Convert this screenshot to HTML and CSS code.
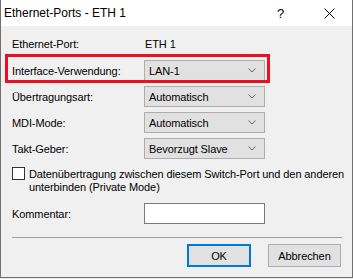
FILE: index.html
```html
<!DOCTYPE html>
<html lang="de">
<head>
    <meta charset="UTF-8">
    <title>Ethernet-Ports - ETH 1</title>
    <link rel="stylesheet" href="styles.css">
</head>
<body>
    <div class="window">
        <div class="title-bar">
            <span class="title">Ethernet-Ports - ETH 1</span>
            <span class="help">?</span>
            <svg class="close" width="11" height="11" viewBox="0 0 11 11">
                <path d="M0.5 0.5 L10.5 10.5 M10.5 0.5 L0.5 10.5" stroke="#000" stroke-width="1" fill="none"/>
            </svg>
        </div>

        <div class="content">
            <div class="form">
                <div class="row row-first">
                    <span class="label">Ethernet-Port:</span>
                    <span class="value">ETH 1</span>
                </div>
                <div class="row">
                    <span class="label">Interface-Verwendung:</span>
                    <div class="select">LAN-1 <svg class="chevron" width="8" height="5" viewBox="0 0 8 5"><path d="M0.5 0.5 L4 4 L7.5 0.5" stroke="#666" fill="none"/></svg></div>
                </div>
                <div class="row">
                    <span class="label">Übertragungsart:</span>
                    <div class="select">Automatisch <svg class="chevron" width="8" height="5" viewBox="0 0 8 5"><path d="M0.5 0.5 L4 4 L7.5 0.5" stroke="#666" fill="none"/></svg></div>
                </div>
                <div class="row">
                    <span class="label">MDI-Mode:</span>
                    <div class="select">Automatisch <svg class="chevron" width="8" height="5" viewBox="0 0 8 5"><path d="M0.5 0.5 L4 4 L7.5 0.5" stroke="#666" fill="none"/></svg></div>
                </div>
                <div class="row">
                    <span class="label">Takt-Geber:</span>
                    <div class="select">Bevorzugt Slave <svg class="chevron" width="8" height="5" viewBox="0 0 8 5"><path d="M0.5 0.5 L4 4 L7.5 0.5" stroke="#666" fill="none"/></svg></div>
                </div>
            </div>

            <div class="check-row">
                <span class="checkbox"></span>
                <span class="check-text">Datenübertragung zwischen diesem Switch-Port und den anderen<br>unterbinden (Private Mode)</span>
            </div>

            <div class="row row-comment">
                <span class="label">Kommentar:</span>
                <div class="input"></div>
            </div>

            <div class="separator"></div>

            <div class="buttons">
                <div class="button button-default">OK</div>
                <div class="button button-cancel">Abbrechen</div>
            </div>
        </div>

        <div class="highlight"></div>
    </div>
</body>
</html>
```

FILE: styles.css
```css
body{
    margin: 0;
    padding: 0;
    background-color: #e8e8e8;
    font-family: "Liberation Sans", Arial, sans-serif;
    font-size: 11px;
    letter-spacing: -0.1px;
    color: #000;
}
.window{
    position: relative;
    width: 351px;
    height: 277px;
    border: 1px solid #707070;
    border-top: none;
    background-color: #f0f0f0;
}
.title-bar{
    height: 26px;
    background-color: #fff;
    display: flex;
    align-items: center;
}
.title{
    font-size: 12px;
    letter-spacing: 0;
    margin-left: 3px;
    flex: 1;
}
.help{
    font-size: 13px;
    width: 10px;
    margin-right: 37px;
}
.close{
    margin-right: 17px;
}
.content{
    padding: 0 10px 0 11px;
}
.form{
    display: flex;
    flex-direction: column;
    gap: 5px;
}
.row{
    display: flex;
    align-items: center;
    height: 21px;
}
.row-first{
    margin-top: 7px;
    height: 22px;
}
.label{
    width: 132px;
}
.value{
    padding-left: 1px;
}
.select{
    box-sizing: border-box;
    width: 121px;
    height: 21px;
    border: 1px solid #adadad;
    background-color: #e1e1e1;
    display: flex;
    align-items: center;
    justify-content: space-between;
    padding: 0 8px 0 4px;
}
.check-row{
    display: flex;
    align-items: flex-start;
    margin-top: 8px;
}
.checkbox{
    box-sizing: border-box;
    width: 13px;
    height: 13px;
    border: 1px solid #333;
    background-color: #fff;
    margin-right: 4px;
    flex-shrink: 0;
}
.check-text{
    line-height: 13px;
    margin-top: 1px;
    white-space: nowrap;
}
.row-comment{
    margin-top: 9px;
}
.input{
    box-sizing: border-box;
    width: 121px;
    height: 21px;
    border: 1px solid #7a7a7a;
    background-color: #fff;
}
.separator{
    margin-top: 13px;
    height: 1px;
    background-color: #a0a0a0;
}
.buttons{
    display: flex;
    justify-content: flex-end;
    gap: 17px;
    margin-top: 6px;
    margin-right: 1px;
}
.button{
    box-sizing: border-box;
    height: 23px;
    border: 1px solid #adadad;
    background-color: #e1e1e1;
    display: flex;
    align-items: center;
    justify-content: center;
}
.button-default{
    width: 64px;
    border: 2px solid #0078d7;
}
.button-cancel{
    width: 73px;
}
.highlight{
    position: absolute;
    left: 4px;
    top: 54px;
    width: 259px;
    height: 23px;
    border: 3px solid #e81123;
}
```
